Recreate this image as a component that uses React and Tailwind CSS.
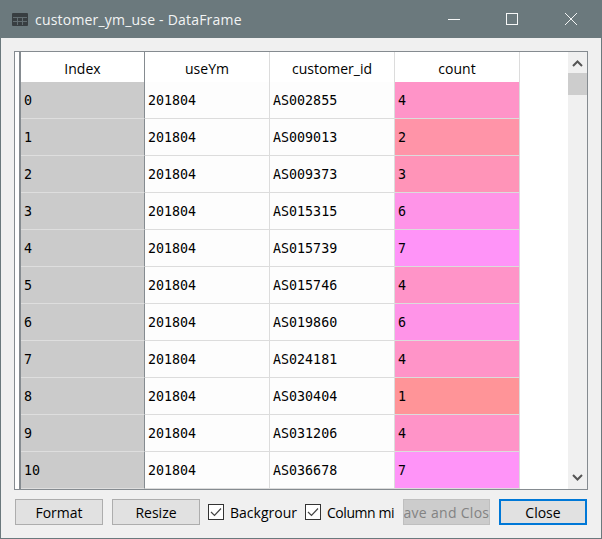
import React from 'react';

const rows = [
  ['0', 'AS002855', 4],
  ['1', 'AS009013', 2],
  ['2', 'AS009373', 3],
  ['3', 'AS015315', 6],
  ['4', 'AS015739', 7],
  ['5', 'AS015746', 4],
  ['6', 'AS019860', 6],
  ['7', 'AS024181', 4],
  ['8', 'AS030404', 1],
  ['9', 'AS031206', 4],
  ['10', 'AS036678', 7],
];

const countColors = {
  1: 'bg-[#ff9498]',
  2: 'bg-[#ff94a8]',
  3: 'bg-[#ff94b8]',
  4: 'bg-[#ff94c8]',
  6: 'bg-[#ff94e8]',
  7: 'bg-[#ff94f8]',
};

function Button({ children, className = '' }) {
  return (
    <div className={`h-[26px] flex items-center justify-center overflow-hidden whitespace-nowrap bg-[#e1e1e1] border border-[#adadad] ${className}`}>
      {children}
    </div>
  );
}

function Check({ label, className = '' }) {
  return (
    <div className={`flex items-center overflow-hidden whitespace-nowrap ${className}`}>
      <svg width="16" height="16" viewBox="0 0 16 16" className="shrink-0">
        <rect x="0.5" y="0.5" width="15" height="15" fill="#fff" stroke="#333" />
        <path d="M3 8l3.5 3.5L13 4.5" fill="none" stroke="#444" strokeWidth="1.2" />
      </svg>
      <span className="ml-[6px]">{label}</span>
    </div>
  );
}

export default function App() {
  return (
    <div className="w-[602px] h-[539px] flex flex-col bg-[#f0f0f0] border border-t-0 border-[#6b797d] overflow-hidden text-[14px] text-black font-['Open_Sans',sans-serif]">
      <div className="h-[38px] shrink-0 -mx-px flex items-center bg-[#6b797d] text-[#f2f4f4]">
        <svg width="16" height="13" viewBox="0 0 16 13" className="ml-[12px]">
          <rect x="0" y="0" width="16" height="13" rx="1" fill="#383e41" />
          <path d="M1 4.5h14M1 8.5h14M5.5 4v8M10.5 4v8" stroke="#626d71" strokeWidth="1" />
        </svg>
        <span className="ml-[7px] text-[14px] tracking-[0.2px]">customer_ym_use - DataFrame</span>
        <div className="ml-auto flex items-center">
          <svg width="12" height="12" viewBox="0 0 12 12" className="mr-[46px]"><path d="M0 6.5h12" stroke="#f6f7f7" /></svg>
          <svg width="12" height="12" viewBox="0 0 12 12" className="mr-[47px]"><rect x="0.5" y="0.5" width="11" height="11" fill="none" stroke="#f6f7f7" /></svg>
          <svg width="12" height="12" viewBox="0 0 12 12" className="mr-[25px]"><path d="M0 0l12 12M12 0L0 12" stroke="#f2f4f4" /></svg>
        </div>
      </div>

      <div className="mt-[13px] ml-[13px] w-[574px] h-[439px] shrink-0 flex bg-white border border-[#858b90] overflow-hidden">
        <div className="w-[4px] shrink-0 bg-white" />
        <div className="flex-1 min-w-0">
          <div className="flex h-[30px] text-[14px] border-l-2 border-[#858b90]">
            <div className="w-[124px] flex items-center justify-center border-r border-[#858b90] pt-[2px]">Index</div>
            <div className="w-[125px] flex items-center justify-center border-r border-[#dcdcdc] pt-[2px]">useYm</div>
            <div className="w-[125px] flex items-center justify-center border-r border-[#dcdcdc] pt-[2px]">customer_id</div>
            <div className="w-[125px] flex items-center justify-center border-r border-[#dcdcdc] pt-[2px]">count</div>
          </div>
          <div className="font-['DejaVu_Sans_Mono',monospace] text-[13.33px] border-l-2 border-[#858b90]">
            {rows.map(([idx, id, count]) => (
              <div key={idx} className="flex h-[37px]">
                <div className="w-[124px] flex items-center pl-[3px] pt-[2px] bg-[#cbcbcb] border-r border-b border-r-[#858b90] border-b-[#dedede]">{idx}</div>
                <div className="w-[125px] flex items-center pl-[3px] pt-[2px] bg-[#fdfdfd] border-r border-b border-[#dcdcdc]">201804</div>
                <div className="w-[125px] flex items-center pl-[3px] pt-[2px] bg-[#fdfdfd] border-r border-b border-[#dcdcdc]">{id}</div>
                <div className={`w-[125px] flex items-center pl-[3px] pt-[2px] border-r border-b border-[#dcdcdc] ${countColors[count]}`}>{count}</div>
              </div>
            ))}
          </div>
        </div>
        <div className="w-[19px] shrink-0 flex flex-col items-center bg-[#f0f0f0]">
          <svg width="19" height="21" viewBox="0 0 19 21" className="shrink-0"><path d="M5 14l4.5-4.5L14 14" fill="none" stroke="#555" strokeWidth="2" /></svg>
          <div className="w-[19px] h-[22px] bg-[#cdcdcd]" />
          <div className="flex-1" />
          <svg width="19" height="21" viewBox="0 0 19 21" className="shrink-0"><path d="M5 7l4.5 4.5L14 7" fill="none" stroke="#555" strokeWidth="2" /></svg>
        </div>
      </div>

      <div className="flex items-center mt-[9px] ml-[14px] text-[14px]">
        <Button className="w-[88px]">Format</Button>
        <Button className="w-[88px] ml-[9px]">Resize</Button>
        <Check label="Backgrour" className="w-[90px] ml-[8px]" />
        <Check label="Column mi" className="w-[90px] ml-[7px] tracking-[-0.45px]" />
        <div className="w-[87px] h-[26px] ml-[8px] flex items-center justify-center overflow-hidden whitespace-nowrap bg-[#cccccc] border border-[#bfbfbf] text-[#838383]">
          <span className="shrink-0 tracking-[0.3px]">Save and Close</span>
        </div>
        <div className="w-[88px] h-[26px] ml-[9px] flex items-center justify-center bg-[#e1e1e1] border-2 border-[#0078d7]">Close</div>
      </div>
    </div>
  );
}
